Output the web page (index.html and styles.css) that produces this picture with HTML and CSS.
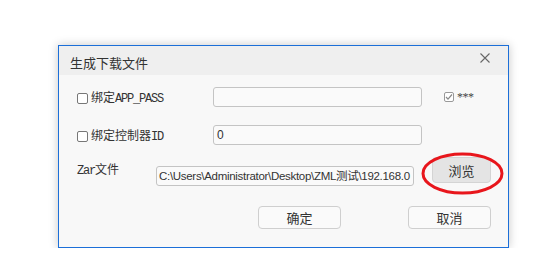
FILE: index.html
```html
<!DOCTYPE html>
<html lang="zh">
  <head>
    <meta charset="UTF-8" />
    <title>生成下载文件</title>
    <link rel="stylesheet" href="styles.css">
  </head>
  <body>
    <div class="dialog">
      <div class="titlebar">
        <span class="title">生成下载文件</span>
        <svg class="close" width="10" height="10" viewBox="0 0 10 10">
          <path d="M0.5 0.5 L9.5 9.5 M9.5 0.5 L0.5 9.5" stroke="#666" stroke-width="1.1" fill="none" />
        </svg>
      </div>

      <div class="content">
        <div class="row">
          <label class="check-label">
            <span class="box"></span>
            <span class="text">绑定<span class="asc">APP_PASS</span></span>
          </label>
          <div class="field"></div>
          <label class="show-pass">
            <span class="box checked">
              <svg width="8" height="8" viewBox="0 0 8 8"><path d="M1 4 L3 6.2 L7 1.5" stroke="#888" stroke-width="1.2" fill="none" /></svg>
            </span>
            <span class="stars">***</span>
          </label>
        </div>

        <div class="row row-2">
          <label class="check-label">
            <span class="box"></span>
            <span class="text">绑定控制器<span class="asc">ID</span></span>
          </label>
          <div class="field">0</div>
        </div>

        <div class="row row-3">
          <span class="zar-label"><span class="asc">Zar</span>文件</span>
          <div class="field path">C:\Users\Administrator\Desktop\ZML测试\192.168.0</div>
          <div class="browse-wrap">
            <button class="btn browse">浏览</button>
            <svg class="circle" width="83" height="43" viewBox="0 0 83 43">
              <ellipse cx="41.5" cy="21.5" rx="39.5" ry="19.5" stroke="#e8161c" stroke-width="3" fill="none" />
            </svg>
          </div>
        </div>

        <div class="row row-4">
          <button class="btn action">确定</button>
          <button class="btn action">取消</button>
        </div>
      </div>
    </div>
  </body>
</html>
```

FILE: styles.css
```css
body {
  margin: 0;
  background-color: #fff;
  font-family: "Noto Sans CJK SC", sans-serif;
  color: #333;
}

/* Dialog frame */
.dialog {
  box-sizing: border-box;
  width: 451px;
  height: 203px;
  margin: 45px 0 0 58px;
  border: 1px solid #1c6fd8;
  background-color: #f8f8f8;
  box-shadow: 0 0 9px rgba(0, 0, 0, 0.22);
}

.titlebar {
  display: flex;
  align-items: center;
  height: 29px;
  padding: 3px 18px 0 11px;
  box-sizing: border-box;
  background-color: #efefef;
}

.title {
  font-size: 13px;
  color: #333;
}

.close {
  margin-left: auto;
  margin-top: -9px;
}

.content {
  padding: 12px 0 0 18px;
}

.row {
  display: flex;
  align-items: center;
  height: 20px;
  font-size: 12px;
}

.row-2 {
  margin-top: 18px;
}

.row-3 {
  margin-top: 12px;
  height: 29px;
  align-items: flex-start;
}

.row-4 {
  margin-top: 20px;
  height: 23px;
  padding-left: 181px;
  gap: 67px;
}

.asc {
  font-family: "Liberation Mono", monospace;
  letter-spacing: -1.2px;
  font-size: 12px;
}

/* Checkboxes */
.check-label {
  display: flex;
  align-items: center;
  width: 136px;
  padding-top: 2px;
  color: #333;
}

.check-label .text {
  line-height: 14px;
}

.box {
  box-sizing: border-box;
  width: 11px;
  height: 11px;
  margin-right: 3px;
  border: 1px solid #777;
  border-radius: 2px;
  background-color: #fff;
}

.box.checked {
  display: flex;
  align-items: center;
  justify-content: center;
  width: 10px;
  height: 10px;
  border-color: #999;
}

.show-pass {
  display: flex;
  align-items: center;
  margin-left: 22px;
}

.stars {
  font-family: "Liberation Serif", serif;
  font-size: 12px;
  color: #444;
  letter-spacing: -0.5px;
}

/* Text fields */
.field {
  box-sizing: border-box;
  width: 209px;
  height: 20px;
  padding: 0 3px;
  border: 1px solid #c4c4c4;
  border-radius: 3px;
  background-color: #fafafa;
  font-family: "Liberation Sans", "Noto Sans CJK SC", sans-serif;
  font-size: 12px;
  line-height: 18px;
  color: #333;
  white-space: nowrap;
  overflow: hidden;
}

.zar-label {
  width: 79px;
  padding-top: 5px;
  line-height: 14px;
  color: #333;
}

.field.path {
  width: 258px;
  margin-top: 9px;
  padding: 0 2px;
  font-size: 11.5px;
  letter-spacing: -0.3px;
}

/* Buttons */
.btn {
  box-sizing: border-box;
  margin: 0;
  padding: 0;
  border: 1px solid #cfcfcf;
  border-radius: 4px;
  font-family: "Noto Sans CJK SC", sans-serif;
  font-size: 13px;
  color: #333;
}

.browse-wrap {
  position: relative;
  margin-left: 18px;
}

.browse {
  width: 59px;
  height: 26px;
  background-color: #e4e4e4;
  border-color: #d4d4d4;
}

.circle {
  position: absolute;
  left: -11px;
  top: -5px;
  pointer-events: none;
}

.action {
  width: 83px;
  height: 23px;
  background-color: #fafafa;
}
```
